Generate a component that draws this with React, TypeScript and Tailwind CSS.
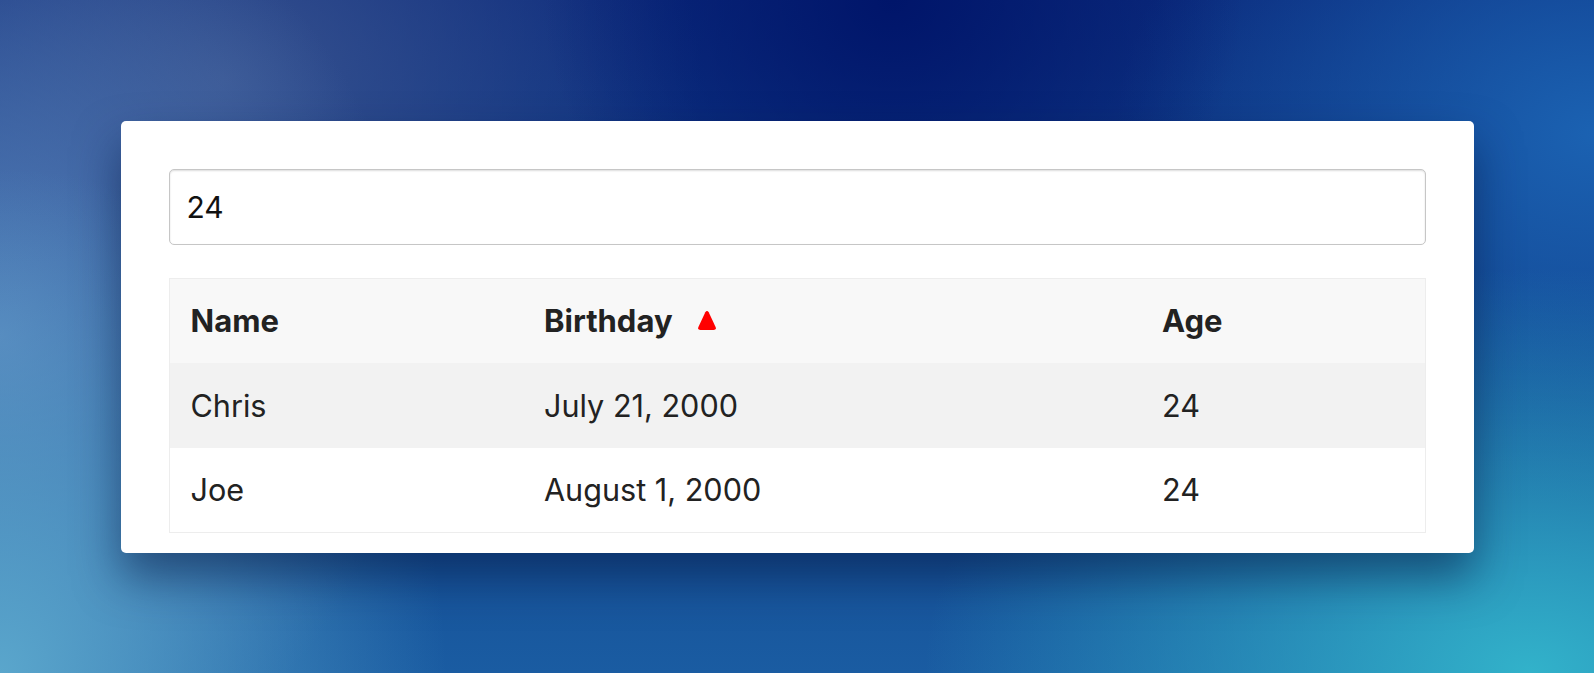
import React from 'react'

const rows = [
  { name: 'Chris', birthday: 'July 21, 2000', age: 24 },
  { name: 'Joe', birthday: 'August 1, 2000', age: 24 },
]

function SortArrow() {
  return (
    <svg width="20" height="21" viewBox="0 0 20 21" className="inline-block">
      <path d="M8.3 2.2 Q10 -0.4 11.7 2.2 L18.6 17 Q19.6 20 16.6 20 L3.4 20 Q0.4 20 1.4 17 Z" fill="#ff0000" />
    </svg>
  )
}

export default function App() {
  return (
    <div className="h-screen w-full flex items-center justify-center font-['Inter',sans-serif] bg-[radial-gradient(ellipse_22%_45%_at_56%_0%,#00156a_0%,transparent_100%),radial-gradient(ellipse_28%_75%_at_0%_100%,#5aa6cc_0%,transparent_100%),radial-gradient(ellipse_26%_70%_at_0%_50%,#5580ba_0%,transparent_100%),radial-gradient(ellipse_30%_55%_at_14%_12%,#37528f_0%,transparent_100%),radial-gradient(ellipse_38%_60%_at_96%_100%,#32b2ca_0%,transparent_100%),radial-gradient(ellipse_30%_55%_at_100%_20%,#1b62b2_0%,transparent_100%),linear-gradient(to_bottom,#0b2a7c_0%,#12478f_60%,#1a5ca2_100%)]">
      <div className="w-[1353px] h-[432px] bg-white rounded-[5px] pt-12 px-12 pb-5 shadow-[0_24px_45px_rgba(5,25,70,0.55)]">
        {/* search */}
        <input
          defaultValue="24"
          className="w-full h-[76px] border border-[#c6c6c6] rounded-[5px] pl-[17px] text-[30px] text-[#111] outline-none shadow-[inset_0_1px_2px_rgba(0,0,0,0.14)]"
        />

        {/* table */}
        <table className="w-full mt-[33px] border-collapse border border-[#ededed] table-fixed text-[30.6px] text-[#222]">
          <colgroup>
            <col className="w-[354px]" />
            <col className="w-[618px]" />
            <col />
          </colgroup>
          <thead>
            <tr className="bg-[#f8f8f8] h-[85px] text-[31px]">
              <th className="text-left font-bold px-[21px]">Name</th>
              <th className="text-left font-bold px-[21px]">
                <span className="inline-flex items-center gap-[24px]">
                  Birthday
                  <SortArrow />
                </span>
              </th>
              <th className="text-left font-bold px-[21px]">Age</th>
            </tr>
          </thead>
          <tbody>
            {rows.map((r, i) => (
              <tr key={r.name} className={i % 2 === 0 ? 'bg-[#f2f2f2] h-[85px]' : 'bg-white h-[84px]'}>
                <td className="px-[21px]">{r.name}</td>
                <td className="px-[21px]">{r.birthday}</td>
                <td className="px-[21px]">{r.age}</td>
              </tr>
            ))}
          </tbody>
        </table>
      </div>
    </div>
  )
}
